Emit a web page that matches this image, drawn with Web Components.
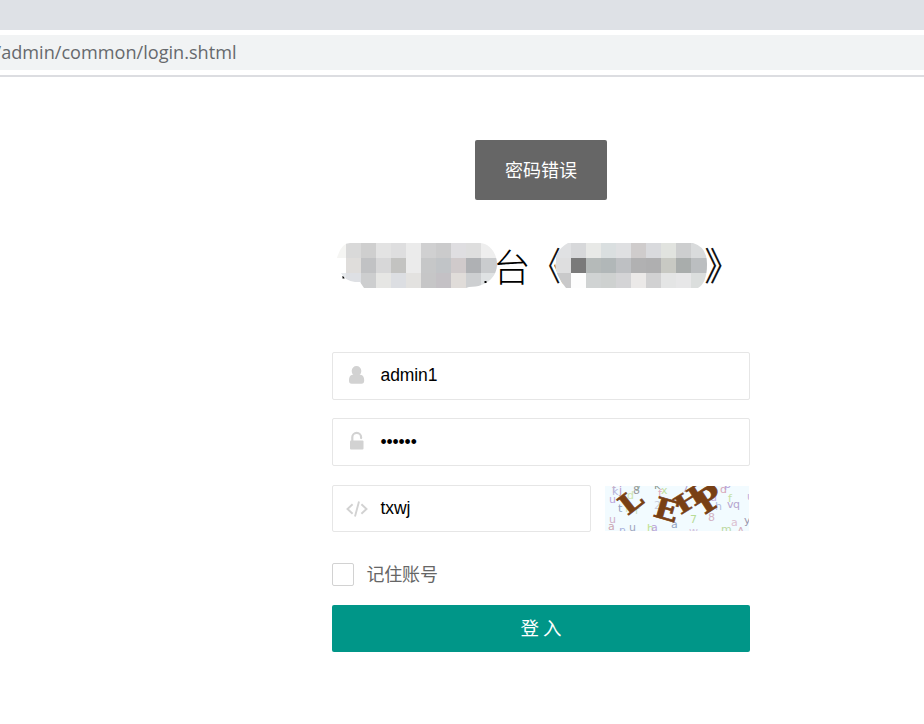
<!DOCTYPE html>
<html lang="zh">
<head>
<meta charset="utf-8">
<title>login</title>
<style>
html,body{margin:0;height:100%;background:#fff;overflow:hidden}
body{font-family:"Noto Sans CJK SC",sans-serif}
</style>
</head>
<body>
<login-page></login-page>
<script>
const define = (name, html, setup) => customElements.define(name, class extends HTMLElement {
  constructor() {
    super();
    const t = document.createElement('template');
    t.innerHTML = html;
    this.attachShadow({mode: 'open'}).append(t.content.cloneNode(true));
  }
  connectedCallback() { if (setup) setup(this, this.shadowRoot); }
});

define('browser-bar', `
<style>
:host{display:block;height:77px;box-sizing:border-box;border-bottom:2px solid #dcdde1;background:#fff}
.tabs{height:30px;background:#dee1e6}
.url{margin-top:5px;height:35px;background:#f1f3f4;color:#5f6368;overflow:hidden}
svg{display:block}
text{font:18.5px "Open Sans","Noto Sans",sans-serif;fill:#66696d}
</style>
<div class="tabs"></div>
<div class="url"><svg width="924" height="35"><text x="-5.500" y="24" textLength="242" lengthAdjust="spacingAndGlyphs">/admin/common/login.shtml</text></svg></div>`);

define('toast-message', `
<style>
:host{display:block;text-align:center;width:132px;height:60px;border-radius:2px;background:#666;color:#fff;font-size:18px;line-height:58px}
</style><slot></slot>`);

define('page-title', `
<style>:host{display:block;height:60px}svg{display:block}
text{font:300 36px "Noto Sans CJK SC",sans-serif;fill:#000}
.q{stroke:#000;stroke-width:.4}</style>
<svg width="418" height="60" viewBox="332 235 418 60">
<defs>
<clipPath id="a"><path d="M337 258Q341 243 350 243H479C491 243 497 255 497 264C497 276 488 287 469 287L466 288H364L360 282H355Q345 281 341 273L346 272V258Z"/></clipPath>
<clipPath id="b"><path d="M568 243H693Q707 247 707 264Q707 283 698 288H566Q555 275 555 263Q556 249 568 243Z"/></clipPath>
</defs>
<path d="M342.500 276h2v2.500h-2z"/>
<text x="493" y="280.500" style="font-size:37.500px">台</text>
<text class="q" transform="translate(530 280) scale(1 1.060)">《</text>
<text class="q" transform="translate(704.500 280) scale(1 1.060)">》</text>
<g class="m" shape-rendering="crispEdges"></g>
<path d="M484.500 281h2v2h-2z"/>
</svg>`, (host, root) => {
  const blocks = [
    ['a', 331, [
      'f5f5f3 d9d9d9 cfcfcf e3e3e3 dededf ebebeb d0d0d1 cbcbcc dfdee1 dedede eeeeee',
      'ffffff dfdddb c1c2c4 d7d7d8 c3c3c1 ebebeb c6c7c8 c1c4c7 d0cacb afb1b4 caccce',
      'e6e9ec dee0e4 cdcecf e6e6e4 dcdee2 e3e2e0 c6c6c7 c4c1c5 e0dcd9 cdcfd1 dfe2e3']],
    ['b', 541, [
      'ffffff e0e1e3 d7d8da e8e9e7 dadfe0 dfe0e2 cfcccc d9dadd e1e3df cdcecf d9dbdc',
      'ffffff dededf 7a7a7a b5bab9 b1b7b8 bec0c3 b1b1b2 afafb0 c8c9c3 a9adac bbbec0',
      'ffffff c9c9ca fdfdfd d0d3d3 ced1d0 d4d4d6 ebe9e8 d1d1d2 e4e5e5 e7e7e8 dbdedd']]
  ];
  root.querySelector('.m').innerHTML = blocks.map(([id, x0, rows]) =>
    `<g clip-path="url(#${id})">` + rows.map((r, j) => r.split(' ').map((c, i) =>
      `<rect x="${x0 + i * 15}" y="${243 + j * 15}" width="${i == 10 ? 17 : 15}" height="15" fill="#${c}"/>`).join('')).join('') + '</g>').join('');
});

define('text-field', `
<style>
:host{display:flex;align-items:center;box-sizing:border-box;border:1px solid #e6e6e6;border-radius:2px;background:#fff;color:#000;font:17.500px "Liberation Sans",Arial,sans-serif}
.icon{flex:none;width:47.500px;height:100%}
.icon svg{display:block;width:48px;height:46px;fill:#d2d2d2}
.value{line-height:44px;height:46px;letter-spacing:-.1px}
</style>
<div class="icon"></div><div class="value"><slot></slot></div>`, (host, root) => {
  const icons = {
    user: '<path d="M23.500 13a4.800 4.800 0 0 1 4.800 4.800c0 2-.8 3.700-2.100 4.600a5 5 0 0 1-5.400 0c-1.300-.9-2.100-2.600-2.100-4.600A4.800 4.800 0 0 1 23.500 13ZM19.600 21.800q3.900 2.700 7.800 0c2.700.2 3.800 2.600 3.800 5.700 0 2-.9 3.300-2.700 3.300H18.700c-1.900 0-2.700-1.200-2.700-3.300 0-3.100 1-5.500 3.600-5.700Z"/>',
    lock: '<path d="M19.300 22v-3.700a4.400 4.400 0 0 1 8.800 0v.8" fill="none" stroke="#d2d2d2" stroke-width="2.200" stroke-linecap="round"/><rect x="17" y="21.500" width="13.500" height="9" rx="1"/>',
    code: '<path d="M19.600 18.300L14.500 23l5.100 4.700M28.400 18.300L33.500 23l-5.100 4.700M26 15.500L22 30.500" fill="none" stroke="#d2d2d2" stroke-width="1.900"/>'
  };
  root.querySelector('.icon').innerHTML = `<svg viewBox="0 0 48 46">${icons[host.getAttribute('icon')]}</svg>`;
});

define('captcha-image', `
<style>:host{display:block;width:144px;height:45px}svg{display:block}
.n{font:11px "DejaVu Sans",sans-serif}
.w{font:bold 28px "DejaVu Serif",serif;fill:#784014;stroke:#784014;stroke-width:.6}</style>
<svg width="144" height="45" viewBox="0 0 144 45"><rect width="144" height="45" fill="#f2fbff"/>
<g class="n"></g><g class="w"></g></svg>`, (host, root) => {
  const noise = [['f',7,7,'c9a3bd'],['k',7,9,'b9b8de'],['j',14,8,'b59acb'],['u',4,17,'bca6dd'],['d',22,13,'cde5b0'],['8',28,8,'9a9a9a'],['y',30,3,'99a99f'],['t',13,26,'8fa3c2'],['r',30,28,'c8dfc0'],['f',20,26,'cfe4b5'],['u',4,37,'d0aec7'],['a',3,44,'cba5b1'],['n',14,48,'a9b1dc'],['u',24,45,'9fa4bd'],['h',42,46,'bce18e'],['a',46,45,'bba5d8'],['k',49,3,'87998f'],['x',56,8,'c0dfa0'],['f',53,11,'dfadc0'],['2',49,23,'c9cfe0'],['a',66,42,'92a5c4'],['7',77,6,'b3a7d6'],['7',85,37,'b8dc96'],['8',103,35,'d3b2c4'],['u',105,15,'c5aed9'],['h',110,24,'b3bde0'],['d',115,7,'d7a6b8'],['p',119,2,'b8a5d9'],['f',123,16,'c4e1a3'],['v',122,22,'b5a5cf'],['q',128,22,'b5a5cf'],['a',126,40,'dbc0d1'],['y',139,38,'9995ad'],['u',142,14,'c3add9'],['m',116,47,'bcd8a1'],['A',132,49,'d6afbb'],['w',84,49,'d4c0dd']];
  // letter, centre x, centre y, rotation, horizontal scale, vertical scale
  const word = [['L',25.500,15.500,-38,1.150,.980],['E',61.500,23.500,16,1.150,1.020],['H',84,13.500,-32,1.180,.880],['P',104,13,-33,1.200,1.120]];
  root.querySelector('.n').innerHTML = noise.map(([c,x,y,f]) => `<text x="${x}" y="${y}" fill="#${f}">${c}</text>`).join('');
  root.querySelector('.w').innerHTML = word.map(([c,x,y,r,sx,sy]) => `<text text-anchor="middle" y="10" transform="translate(${x} ${y}) rotate(${r}) scale(${sx} ${sy})">${c}</text>`).join('');
});

define('check-option', `
<style>:host{display:flex;align-items:center;height:24px;gap:12.500px;color:#666;font-size:18px;line-height:24px}
i{box-sizing:border-box;width:22px;height:23px;border:1px solid #d2d2d2;border-radius:2px}
span{letter-spacing:-.2px;margin-top:-3px}</style>
<i></i><span><slot></slot></span>`);

define('submit-button', `
<style>:host{display:block;height:47px;border-radius:2px;background:#009688;color:#fff;text-align:center;font-size:18.500px;line-height:45px}</style><slot></slot>`);

define('login-page', `
<style>
:host{display:block;height:724px;background:#fff}
main{width:418px;margin-left:332px;padding-top:63px;display:flex;flex-direction:column}
toast-message{align-self:center}
page-title{margin-top:35px}
.user{height:48px;margin-top:57px}
.pass{height:48px;margin-top:18px}
.pass b{display:block;font:inherit;letter-spacing:-.100px;padding-top:1px}
.row{display:flex;margin-top:19px;gap:14px;align-items:flex-start}
.row text-field{width:259px;height:47px}
captcha-image{margin-top:1px}
check-option{margin-top:30px}
submit-button{margin-top:19px}
</style>
<browser-bar></browser-bar>
<main>
<toast-message>密码错误</toast-message>
<page-title></page-title>
<text-field class="user" icon="user">admin1</text-field>
<text-field class="pass" icon="lock"><b>••••••</b></text-field>
<div class="row"><text-field icon="code">txwj</text-field><captcha-image></captcha-image></div>
<check-option>记住账号</check-option>
<submit-button>登 入</submit-button>
</main>`);
</script>
</body>
</html>
